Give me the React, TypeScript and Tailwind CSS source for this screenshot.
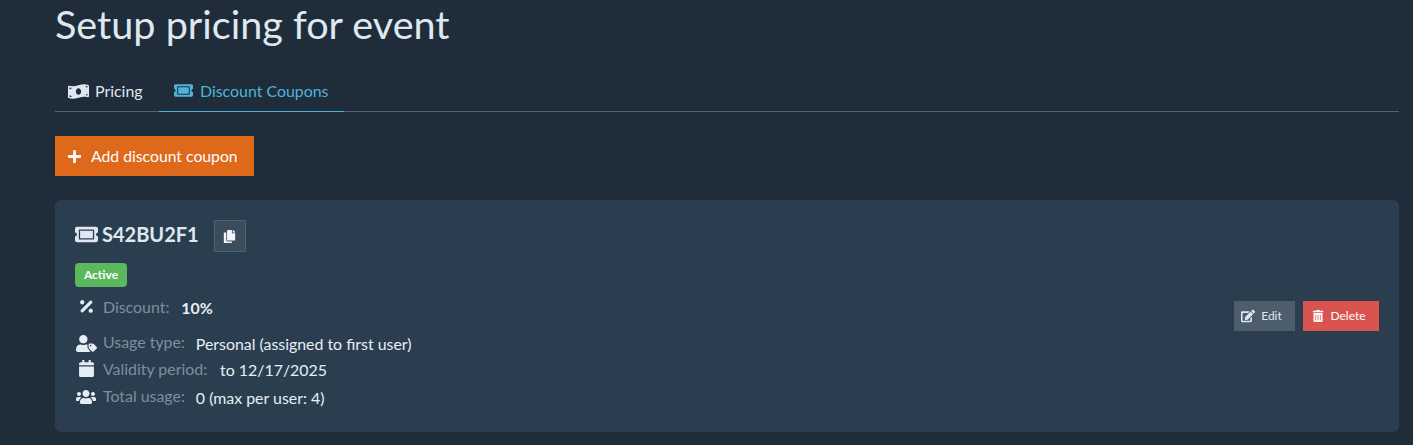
import React from 'react';
import { FaMoneyBillWave, FaTicketAlt, FaPlus, FaCopy, FaPercentage, FaUserTag, FaCalendar, FaUsers, FaEdit, FaTrashAlt } from 'react-icons/fa';

function InfoRow({ icon, label, value, className, valueClass }: { icon: React.ReactNode; label: string; value: string; className: string; valueClass: string }) {
  return (
    <div className={`flex items-start ${className}`}>
      <span className="flex w-[22px] justify-center text-[#e4edf5]">{icon}</span>
      <span className="ml-[6px] text-[15.9px] leading-[18px] text-[#7e8e9e]">{label}</span>
      <span className={`text-[15.9px] leading-[18px] text-[#e8eef4] ${valueClass}`}>{value}</span>
    </div>
  );
}

export default function App() {
  return (
    <div className="h-[445px] w-[1413px] overflow-hidden bg-[#1f2d3b] pl-[55px] pr-[14px] font-['Lato',sans-serif]">
      <h1 className="text-[39.6px] leading-[48px] font-normal text-[#dfe8ef]">Setup pricing for event</h1>

      <div className="mt-[18px] flex h-[46px] border-b border-[#56636f]">
        <div className="flex h-[46px] w-[104px] items-center pl-[13px] pt-[4px] text-[15.9px] text-[#dfe8ef]">
          <FaMoneyBillWave className="mr-[6px] text-[21px] text-[#dfe8ef]" />
          Pricing
        </div>
        <div className="flex h-[46px] w-[185px] items-center border-b border-[#4fb3d9] pl-[15px] pt-[4px] text-[15.9px] text-[#4fb3d9]">
          <FaTicketAlt className="mr-[7px] text-[19px]" />
          Discount Coupons
        </div>
      </div>

      <button className="mt-[24px] flex h-[40px] w-[199px] items-center bg-[#df691a] pl-[12px] text-[15.75px] text-white">
        <FaPlus className="mr-[9px] text-[15px]" />
        Add discount coupon
      </button>

      <div className="mt-[24px] flex h-[232px] items-center justify-between rounded-[6px] bg-[#2b3e50] pl-[20px] pr-[20px]">
        <div className="self-start pt-[20px]">
          <div className="flex items-center">
            <FaTicketAlt className="mb-[3px] text-[23px] text-[#dfe8ef]" />
            <span className="ml-[4px] mb-[4px] text-[20px] leading-[24px] font-bold text-[#dfe8ef]">S42BU2F1</span>
            <button className="ml-[15px] flex h-[32px] w-[32px] items-center justify-center border border-[#56636f] bg-[#3b4c5d] text-[#f2f5f8]">
              <FaCopy className="mt-[1px] text-[13px]" />
            </button>
          </div>
          <span className="mt-[11px] flex h-[24px] w-[52px] items-center justify-center rounded-[4px] bg-[#5cb85c] text-[12px] font-bold text-white">Active</span>
          <InfoRow className="mt-[11px]" icon={<FaPercentage className="text-[17px]" />} label="Discount:" value="10%" valueClass="ml-[12px] mt-[1px] font-bold" />
          <InfoRow className="mt-[16px]" icon={<FaUserTag className="text-[21px]" />} label="Usage type:" value="Personal (assigned to first user)" valueClass="ml-[11px] mt-[2px]" />
          <InfoRow className="mt-[6px]" icon={<FaCalendar className="text-[17px]" />} label="Validity period:" value="to 12/17/2025" valueClass="ml-[13px] mt-[1px]" />
          <InfoRow className="mt-[8px]" icon={<FaUsers className="text-[20px]" />} label="Total usage:" value="0 (max per user: 4)" valueClass="ml-[11px] mt-[2px]" />
        </div>
        <div className="flex gap-[8px]">
          <button className="flex h-[30px] w-[61px] items-center justify-center bg-[#4e5d6c] pr-[6px] text-[12px] text-[#dfe8ef]">
            <FaEdit className="mr-[6px] text-[14px]" />
            Edit
          </button>
          <button className="flex h-[30px] w-[76px] items-center justify-center bg-[#d9534f] pr-[4px] text-[12px] text-white">
            <FaTrashAlt className="mr-[6px] text-[12px]" />
            Delete
          </button>
        </div>
      </div>
    </div>
  );
}
